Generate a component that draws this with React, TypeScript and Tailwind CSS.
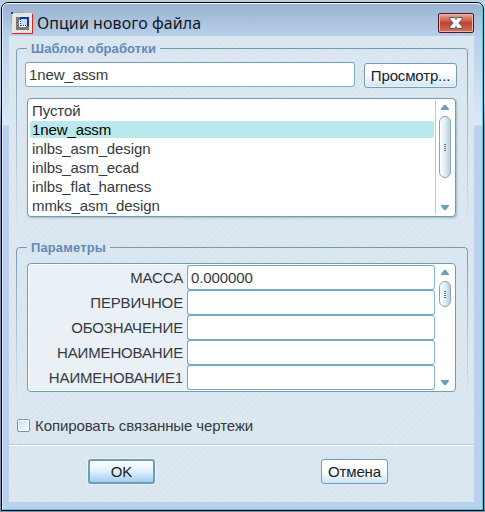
import React from 'react';

const templates = ['Пустой', '1new_assm', 'inlbs_asm_design', 'inlbs_asm_ecad', 'inlbs_flat_harness', 'mmks_asm_design'];
const params = [
  { name: 'МАССА', value: '0.000000' },
  { name: 'ПЕРВИЧНОЕ', value: '' },
  { name: 'ОБОЗНАЧЕНИЕ', value: '' },
  { name: 'НАИМЕНОВАНИЕ', value: '' },
  { name: 'НАИМЕНОВАНИЕ1', value: '' },
];

function Arrow({ down = false }: { down?: boolean }) {
  return (
    <svg width="8" height="5" viewBox="0 0 8 5" className="shrink-0">
      <path d={down ? 'M0 0h8v1L5 5H3L0 1z' : 'M0 5h8V4L5 0H3L0 4z'} fill="#6f9fb8" />
    </svg>
  );
}

function ScrollBar({ thumb }: { thumb: string }) {
  return (
    <div className="flex w-[18px] shrink-0 flex-col items-center py-[6px]">
      <Arrow />
      <div className={`mt-[6px] flex w-3 flex-col items-center justify-center gap-px rounded-full border border-[#83a6bd] bg-linear-to-r from-white via-[#e3edf5] to-[#b9cfde] ${thumb}`}>
        <i className="h-px w-[2px] bg-[#4c7c9c]" />
        <i className="h-px w-[2px] bg-[#4c7c9c]" />
        <i className="h-px w-[2px] bg-[#4c7c9c]" />
        <i className="h-px w-[2px] bg-[#4c7c9c]" />
      </div>
      <div className="flex-1" />
      <Arrow down />
    </div>
  );
}

function Group({ title, className, children }: { title: string; className: string; children: React.ReactNode }) {
  return (
    <section className={`relative ml-[7px] w-[452px] ${className}`}>
      <div className="pointer-events-none absolute inset-x-0 top-[7px] bottom-0 rounded-t-[4px] border-x border-t border-[#7598b8] mask-b-from-0% mask-b-to-100%" />
      <h2 className="relative ml-[11px] h-[15px] w-max bg-[#d9e6ef] px-1 text-[13px] leading-[15px] font-bold tracking-[0.12px] whitespace-nowrap text-[#6488b7]">{title}</h2>
      {children}
    </section>
  );
}

export default function App() {
  return (
    <div className="h-[512px] w-[485px] overflow-hidden bg-linear-to-b from-[#b9d3e5] from-20% to-[#7892b5] to-25% pt-[2px] pl-[1px] font-['Liberation_Sans',Arial,sans-serif] text-[15px] tracking-[-0.1px] text-[#343a40]">
      <div className="flex h-[509px] w-[483px] flex-col rounded-t-[7px] border border-black bg-[linear-gradient(to_bottom,#98b2d0_0,#b8d0eb_34px,#dce8f6_122px,#bad1eb_123px)]">
        <div className="flex h-full w-full flex-col rounded-t-[6px] border border-t-[#e9f3fc] border-r-[#43cee0] border-b-[#43cee0] border-l-[#dceafa] pr-[6px] pl-[6px]">
          <header className="flex h-8 shrink-0 items-start pt-2">
            <svg width="22" height="22" viewBox="0 0 22 22" className="ml-[2px] shrink-0" shapeRendering="crispEdges">
              <path d="M1 1h20v20H1z" fill="#e9e6df" />
              <path d="M0 0h12v1H1v10H0z" fill="#8aa4cc" />
              <path d="M0 0h2v2H0z" fill="#184493" />
              <path d="M21 2h1v20H1v-1h20z" fill="#dc2415" />
              <path d="M5 5h13v13H5z" fill="#777" />
              <path d="M8 8h7v7H8z" fill="#fff" />
              <path d="M9 5h9v9H9z" fill="#0c3a9d" />
              <path d="M10 7h6v6h-6z" fill="#c6dcf5" />
              <path d="M9 8h1v1H9zM9 10h1v1H9zM9 12h1v1H9zM11 13h1v1h-1zM13 13h1v1h-1zM15 13h1v1h-1z" fill="#fff" />
            </svg>
            <h1 className="ml-[4px] font-['Noto_Sans','Open_Sans',sans-serif] text-[16px] leading-[22px] font-normal tracking-[0.07px] whitespace-nowrap text-[#121820]">Опции нового файла</h1>
            <button aria-label="Закрыть" className="mt-px mr-[2px] ml-auto flex h-5 w-9 items-center justify-center rounded-[2px] border border-[#511523] bg-linear-to-b from-[#e8aaa0] to-[#cf755d] via-[#be412f] via-50% shadow-[inset_0_0_0_1px_#f0b4aa]">
              <svg width="14" height="12" viewBox="0 0 14 12">
                <path d="M1 .5h4.5L7 2.5 8.5.5H13v2L9.9 6l3.1 3.5v2H8.5L7 9.5l-1.500 2H1v-2L4.100 6 1 2.500z" fill="#fff" stroke="#535966" />
              </svg>
            </button>
          </header>

          <main className="flex h-[466px] w-[465px] shrink-0 flex-col bg-[#d9e6ef] bg-[repeating-linear-gradient(135deg,#ffffff25_0px,#ffffff25_1px,transparent_1px,transparent_4px)]">
            <Group title="Шаблон обработки" className="mt-[5px] h-[187px]">
              <div className="flex items-start pt-[6px] pl-[9px]">
                <div className="h-[25px] w-[330px] rounded-[3px] border border-[#76b1cf] border-t-[#759bb3] bg-white pl-[3px] leading-[24px] text-[#343a40]">1new_assm</div>
                <button className="mt-px ml-[9px] h-[25px] w-[93px] rounded-[3px] border border-[#749db3] bg-linear-to-b from-white from-45% to-[#cce5f7] text-[15px] leading-[23px] tracking-[-0.15px] whitespace-nowrap text-[#18212b] shadow-[inset_0_0_0_1px_#ffffff90]">Просмотр...</button>
              </div>
              <div className="mt-[10px] ml-[11px] flex h-[119px] w-[429px] rounded-[4px] border border-[#719db2] bg-white shadow-[1px_1px_2px_#9bb8c9]">
                <div className="my-[2px] w-[408px] shrink-0 border-r border-[#b4cbdc] pt-px pl-[2px]">
                  {templates.map((name, i) => (
                    <div key={name} className="h-[19px] w-[404px] leading-[18px] whitespace-nowrap">
                      <div className={`h-[17px] rounded-[2px] pl-[2px] ${i === 1 ? 'bg-[#b9e9ea] text-black' : ''}`}>{name}</div>
                    </div>
                  ))}
                </div>
                <ScrollBar thumb="h-[62px]" />
              </div>
            </Group>

            <Group title="Параметры" className="mt-[12px] h-[162px]">
              <div className="mt-[8px] ml-[11px] flex h-[129px] w-[429px] rounded-[4px] border border-[#719db2] bg-white">
                <div className="my-px ml-px w-[407px] shrink-0 bg-[linear-gradient(to_right,#e9f0f6_400px,#fff_400px)]">
                  {params.map(({ name, value }) => (
                    <div key={name} className="flex h-[25px]">
                      <div className="w-[154px] text-right leading-[26px] tracking-[-0.15px] text-[#343a40]">{name}</div>
                      <div className="ml-[4px] h-[25px] w-[248px] rounded-[3px] border border-[#75a9c7] border-r-[#87bad5] bg-white pl-[3px] leading-[24px]">{value}</div>
                    </div>
                  ))}
                </div>
                <ScrollBar thumb="h-[26px]" />
              </div>
            </Group>

            <label className="mt-[15px] ml-[8px] flex h-[18px] items-center text-[15px] whitespace-nowrap">
              <span className="-mt-px mr-[5px] h-[13px] w-[13px] rounded-[2px] border border-[#7198b2] bg-linear-to-br from-[#c5dced] to-white shadow-[inset_0_0_0_1px_white]" />
              Копировать связанные чертежи
            </label>
            <div className="mt-[9px] h-[2px] shrink-0 border-t border-b border-t-[#b8c9d6] border-b-white" />
            <footer className="flex pt-[13px] pl-[79px]">
              <button className="h-[25px] w-[67px] rounded-[3px] border-2 border-[#729db3] bg-linear-to-b from-white via-[#e0f0fb] to-[#9fcef3] text-[15px] leading-[21px] text-[#18212b] shadow-[0_0_0_1px_#e6f1f8]">OK</button>
              <button className="ml-[166px] h-[25px] w-[67px] rounded-[3px] border border-[#749db3] bg-linear-to-b from-white from-45% to-[#cce5f7] text-[15px] leading-[23px] tracking-[-0.15px] text-[#18212b]">Отмена</button>
            </footer>
          </main>
        </div>
      </div>
    </div>
  );
}
